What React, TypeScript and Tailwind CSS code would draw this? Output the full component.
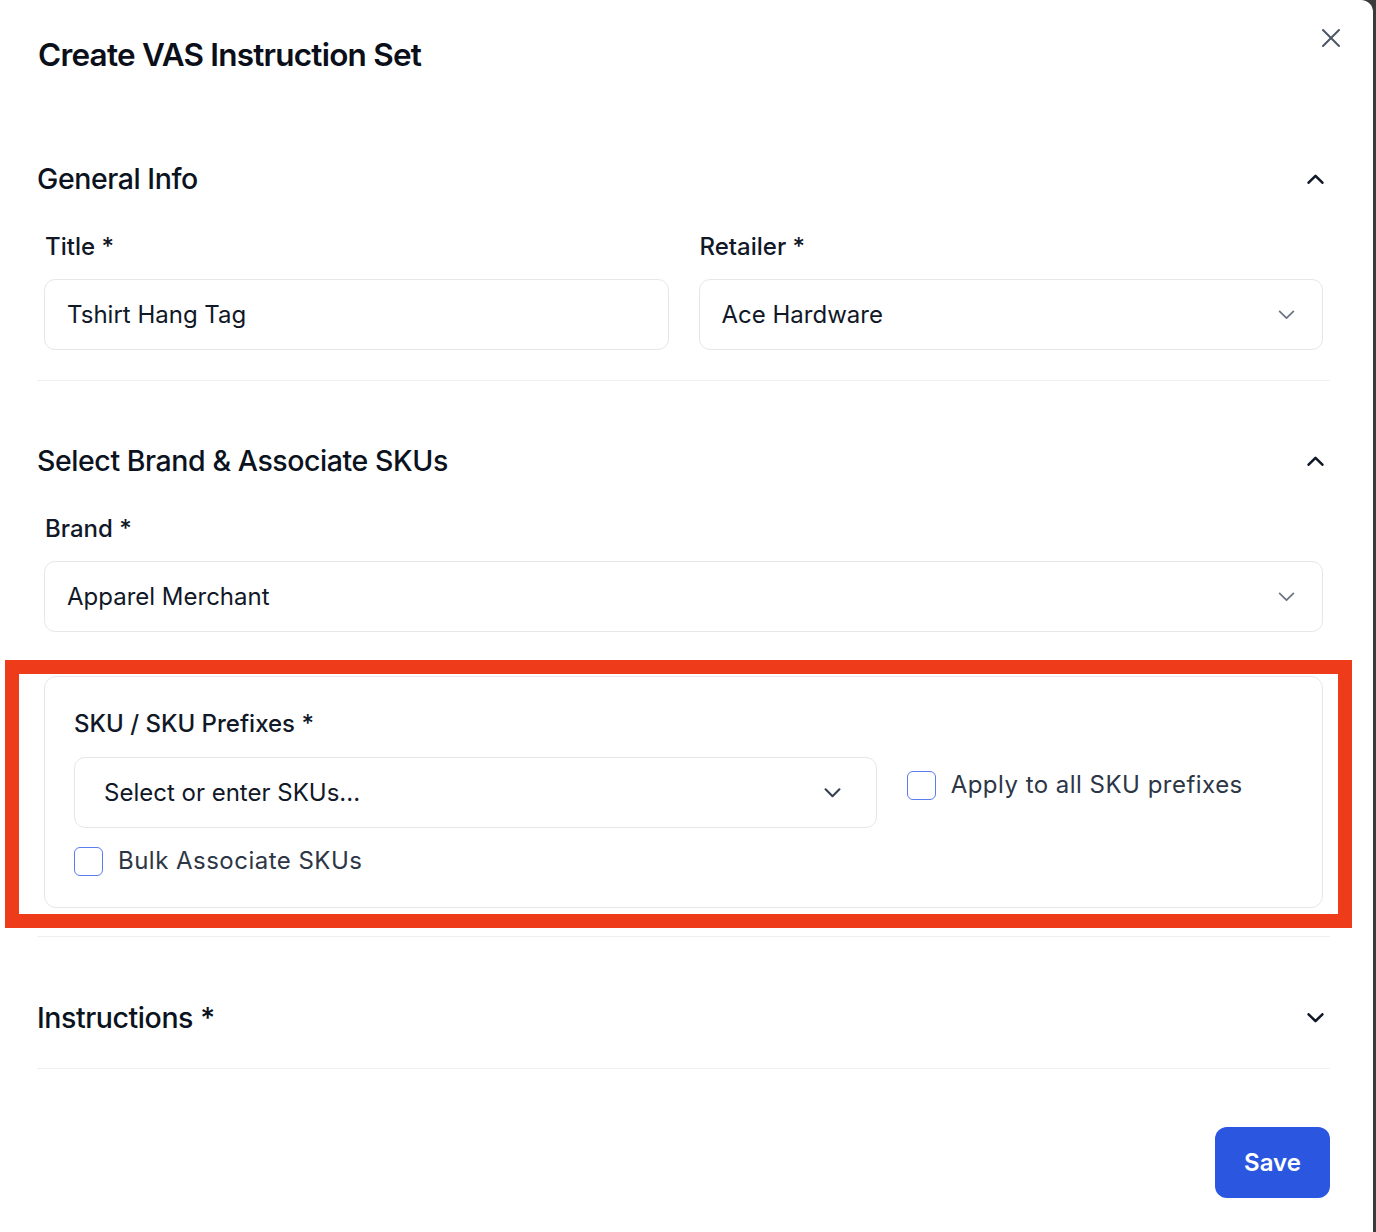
import React from 'react';

const Chevron = ({ up = false, className = '', width = 2 }: { up?: boolean; className?: string; width?: number }) => (
  <svg viewBox="0 0 16 9" className={className} fill="none" stroke="currentColor" strokeWidth={width} strokeLinecap="round" strokeLinejoin="round">
    <path d={up ? 'M1.5 8L8 1.5L14.5 8' : 'M1.5 1L8 7.5L14.5 1'} />
  </svg>
);

const SectionHeader = ({ title, open }: { title: string; open: boolean }) => (
  <div className="h-[42px] flex items-center justify-between">
    <h2 className="text-[28.5px] font-medium tracking-[-0.015em] text-[#0b1220]">{title}</h2>
    <Chevron up={open} width={2.4} className="w-[17px] h-[10px] mr-[6px] text-[#111827]" />
  </div>
);

const Field = ({ label, value, select = false }: { label: string; value: string; select?: boolean }) => (
  <div className="flex flex-col">
    <label className="text-[24px] leading-[36px] font-medium text-[#111827] pl-px">{label}</label>
    <div className="mt-[14px] h-[71px] rounded-[11px] border border-[#e5e7eb] bg-white flex items-center justify-between pl-[22px] pr-[27px] text-[24px] text-[#111827]">
      <span>{value}</span>
      {select && <Chevron width={1.6} className="w-[17px] h-[10px] text-[#6b7280]" />}
    </div>
  </div>
);

const Checkbox = ({ label }: { label: string }) => (
  <label className="flex items-center gap-[15px]">
    <span className="w-[29px] h-[29px] rounded-[6px] border-[1.5px] border-[#5b7cf0] bg-white" />
    <span className="text-[24px] leading-[36px] tracking-[0.02em] text-[#2d3645]">{label}</span>
  </label>
);

export default function App() {
  return (
    <div className="w-[1376px] h-[1232px] bg-[#3b3b3b] flex font-[family-name:Inter,'Noto_Sans',sans-serif]">
      <div className="relative w-[1373px] h-[1232px] bg-white rounded-tr-[12px]">
        {/* header */}
        <div className="pt-[34px] pl-[38px] pr-[32px] flex justify-between items-start">
          <h1 className="text-[31.5px] leading-[42px] font-semibold tracking-[-0.025em] text-[#0b0f19]">Create VAS Instruction Set</h1>
          <button className="mt-[-6px] w-[20px] h-[20px] text-[#4b5563]">
            <svg viewBox="0 0 20 20" className="w-[20px] h-[20px]" fill="none" stroke="currentColor" strokeWidth={2} strokeLinecap="round">
              <path d="M2 2L18 18M18 2L2 18" />
            </svg>
          </button>
        </div>

        <div className="ml-[37px] w-[1293px]">
          {/* General Info */}
          <section className="mt-[82px] pb-[30px] border-b border-[#eef0f4]">
            <SectionHeader title="General Info" open />
            <div className="mt-[29px] px-[7px] grid grid-cols-2 gap-[30px]">
              <Field label="Title *" value="Tshirt Hang Tag" />
              <Field label="Retailer *" value="Ace Hardware" select />
            </div>
          </section>

          {/* Brand & SKUs */}
          <section className="mt-[59px] pb-[28px] border-b border-[#eef0f4]">
            <SectionHeader title="Select Brand & Associate SKUs" open />
            <div className="mt-[29px] px-[7px]">
              <Field label="Brand *" value="Apparel Merchant" select />
              <div className="mt-[44px] rounded-[12px] border border-[#e5e7eb] pt-[29px] pb-[28px] px-[29px]">
                <div className="text-[24px] leading-[36px] font-medium text-[#111827]">SKU / SKU Prefixes *</div>
                <div className="mt-[15px] grid grid-cols-3 gap-[30px]">
                  <div className="col-span-2 h-[71px] rounded-[11px] border border-[#e5e7eb] flex items-center justify-between pl-[29px] pr-[35px] text-[24px] text-[#111827]">
                    <span>Select or enter SKUs...</span>
                    <Chevron width={2} className="w-[17px] h-[10px] text-[#374151]" />
                  </div>
                  <div className="pt-[10px]">
                    <Checkbox label="Apply to all SKU prefixes" />
                  </div>
                </div>
                <div className="mt-[15px]">
                  <Checkbox label="Bulk Associate SKUs" />
                </div>
              </div>
            </div>
          </section>

          {/* Instructions */}
          <section className="mt-[60px] pb-[29px] border-b border-[#eef0f4]">
            <SectionHeader title="Instructions *" open={false} />
          </section>

          <div className="mt-[58px] flex justify-end">
            <button className="w-[115px] h-[71px] rounded-[12px] bg-[#2b57e0] text-white text-[24px] font-semibold">Save</button>
          </div>
        </div>

        {/* highlight annotation */}
        <div className="absolute left-[5px] top-[660px] w-[1347px] h-[268px] border-[14px] border-[#ee3b1a] pointer-events-none" />
      </div>
    </div>
  );
}
